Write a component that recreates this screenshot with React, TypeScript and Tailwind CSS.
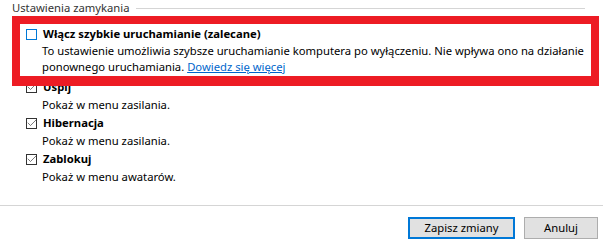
import { Check } from "lucide-react";

const font = { fontFamily: '"Noto Sans", "Open Sans", sans-serif' };

const Box = ({ checked, focused }: { checked?: boolean; focused?: boolean }) => (
  <div
    className={
      focused
        ? "w-[11px] h-[11px] border border-[#0078d7] bg-white shrink-0"
        : "w-[11px] h-[11px] border border-[#333333] bg-white shrink-0 flex items-center justify-center overflow-visible"
    }
  >
    {checked && <Check size={12} strokeWidth={1.3} className="text-[#333333] shrink-0" />}
  </div>
);

const Option = ({ label, desc, checked }: { label: string; desc: string; checked?: boolean }) => (
  <div className="flex flex-col">
    <div className="flex items-center gap-[6px] h-[18px]">
      <Box checked={checked} />
      <span className="font-bold text-[11.25px] text-black">{label}</span>
    </div>
    <div className="pl-[16px] text-[11.25px] leading-[18px] text-black">{desc}</div>
  </div>
);

export default function App() {
  return (
    <div className="relative w-[603px] h-[246px] bg-white overflow-hidden" style={font}>
      <div className="flex flex-col pl-[12px] pt-[1px] pr-[18px]">
        <div className="flex items-center gap-[6px] h-[14px]">
          <span className="text-[11.25px] text-[#333333] whitespace-nowrap">Ustawienia zamykania</span>
          <div className="flex-1 h-px bg-[#d5d5d5]" />
        </div>

        <div className="flex flex-col pl-[14px] pt-[10px]">
          <div className="flex flex-col">
            <div className="flex items-center gap-[6px] h-[18px]">
              <Box focused />
              <span className="font-bold text-[11.25px] text-black">Włącz szybkie uruchamianie (zalecane)</span>
            </div>
            <div className="pl-[16px] text-[11.25px] leading-[16px] text-black pb-[3px] whitespace-nowrap">
              To ustawienie umożliwia szybsze uruchamianie komputera po wyłączeniu. Nie wpływa ono na działanie
              <br />
              ponownego uruchamiania.{" "}
              <span className="text-[#0066cc] underline">Dowiedz się więcej</span>
            </div>
          </div>
          <Option label="Uśpij" desc="Pokaż w menu zasilania." checked />
          <Option label="Hibernacja" desc="Pokaż w menu zasilania." checked />
          <Option label="Zablokuj" desc="Pokaż w menu awatarów." checked />
        </div>
      </div>

      <div className="absolute left-0 right-0 top-[205px] h-px bg-[#d5d5d5]" />
      <div className="absolute left-0 right-0 top-[206px] flex justify-end gap-[9px] pr-[5px] pt-[11px]">
        <button className="w-[107px] h-[22px] border-2 border-[#0078d7] bg-[#e1e1e1] text-[11.25px] text-black">
          Zapisz zmiany
        </button>
        <button className="w-[74px] h-[22px] border border-[#adadad] bg-[#e1e1e1] text-[11.25px] text-black">
          Anuluj
        </button>
      </div>

      <div className="absolute left-[12px] top-[16px] w-[587px] h-[70px] border-[8px] border-b-[10px] border-[#ed1c24]" />
    </div>
  );
}
